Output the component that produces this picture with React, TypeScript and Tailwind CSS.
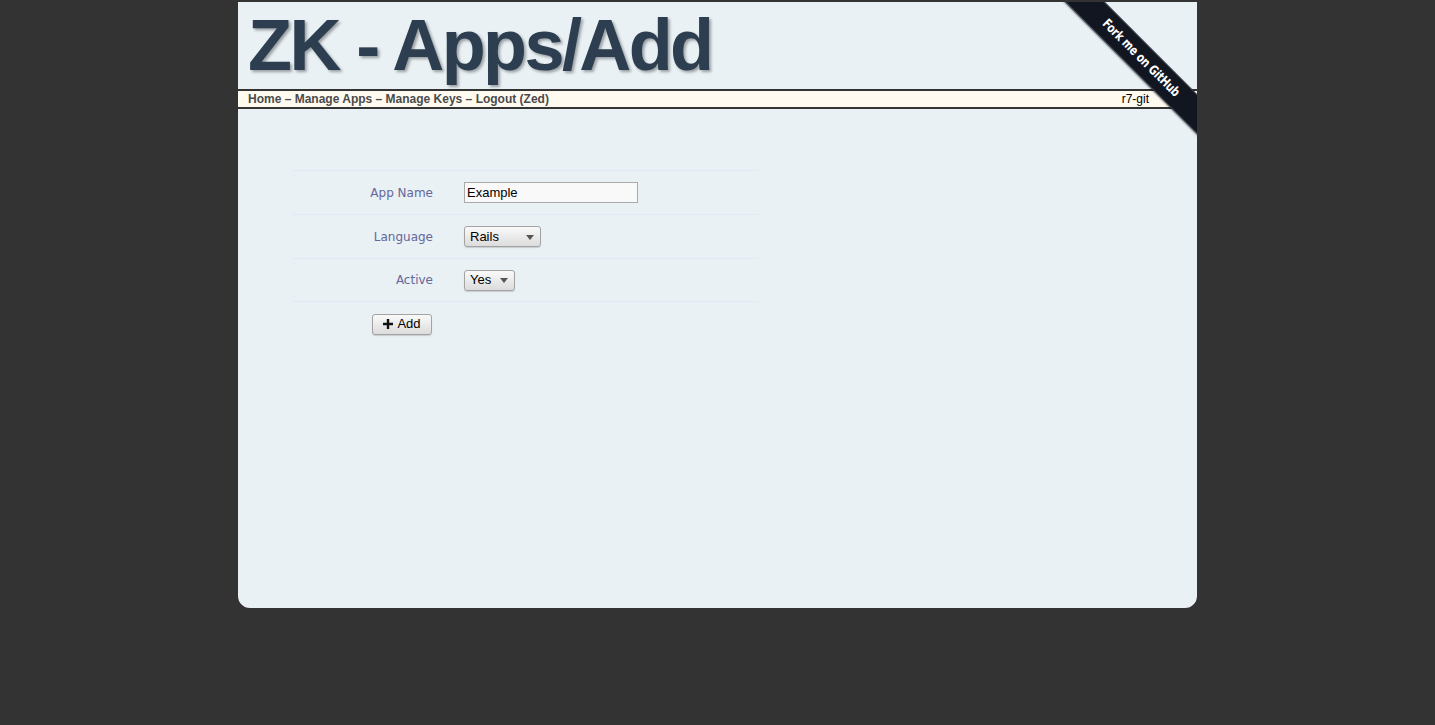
import React from "react";

function Ribbon() {
  return (
    <div className="absolute top-0 right-0 w-[140px] h-[140px] overflow-hidden pointer-events-none">
      <div className="absolute left-[-26px] top-[42px] w-[220px] h-[28px] rotate-45 bg-[#121621] border-y border-[#3d4250] flex items-center justify-center shadow-[0_1px_2px_rgba(0,0,0,0.5)]">
        <span className="inline-block scale-x-[0.86] text-white font-bold text-[13px] tracking-[-0.2px] font-['DejaVu_Sans_Condensed','Liberation_Sans_Narrow','Liberation_Sans',sans-serif]">
          Fork me on GitHub
        </span>
      </div>
    </div>
  );
}

function FakeSelect({ value, width }: { value: string; width: string }) {
  return (
    <div
      className={`${width} h-[21px] flex items-center justify-between pl-[5px] pr-[6px] rounded-[3px] border border-[#a3a3a3] bg-gradient-to-b from-[#fafafa] to-[#dcdcdc] shadow-[0_1px_1px_rgba(0,0,0,0.15)] text-[13px] text-black`}
    >
      <span>{value}</span>
      <svg width="8" height="5" viewBox="0 0 8 5" className="mt-[1px]">
        <path d="M0 0 L8 0 L4 5 Z" fill="#555" />
      </svg>
    </div>
  );
}

const rows = [
  { label: "App Name", control: "input" },
  { label: "Language", control: "lang" },
  { label: "Active", control: "active" },
];

export default function App() {
  return (
    <div className="min-h-[725px] bg-[#333333] font-['Liberation_Sans',Arial,sans-serif]">
      <div className="relative mx-auto w-[963px] h-[610px] border-2 border-[#333] rounded-b-[14px] bg-[#e9f1f5] overflow-hidden">
        {/* Header */}
        <div className="h-[87px] pl-[10px] pt-[7px]">
          <h1 className="text-[72px] leading-[72px] font-bold tracking-[-2.6px] text-[#2c3e50] [text-shadow:2px_2px_3px_rgba(0,0,0,0.35)]">
            ZK - Apps/Add
          </h1>
        </div>

        {/* Nav */}
        <div className="h-[20px] border-y-2 border-[#333] bg-[#fffaf0] flex items-center justify-between pl-[10px] pr-[48px] text-[12px]">
          <div className="font-bold text-[#4a4a4a]">
            Home – Manage Apps – Manage Keys – Logout (Zed)
          </div>
          <div className="text-black">r7-git</div>
        </div>

        {/* Form */}
        <div className="pt-[61px] pl-[55px]">
          <div className="w-[465px]">
            {rows.map((r, i) => (
              <div
                key={r.label}
                className={`h-[44px] flex items-center border-t border-[#e2e8f9] ${i === rows.length - 1 ? "border-b" : ""}`}
              >
                <div className="w-[156px] pr-[16px] text-right text-[12px] text-[#669] font-['DejaVu_Sans',sans-serif]">
                  {r.label}
                </div>
                <div className="pl-[15px]">
                  {r.control === "input" && (
                    <div className="w-[174px] h-[21px] border border-[#aaa] bg-[#f9f9f9] pl-[2px] flex items-center text-[13px] text-black">
                      Example
                    </div>
                  )}
                  {r.control === "lang" && <FakeSelect value="Rails" width="w-[77px]" />}
                  {r.control === "active" && <FakeSelect value="Yes" width="w-[51px]" />}
                </div>
              </div>
            ))}
            <div className="h-[44px] flex items-center">
              <div className="w-[156px] pr-[17px] flex justify-end">
                <button className="w-[60px] h-[21px] flex items-center justify-center gap-[4px] rounded-[3px] border border-[#a3a3a3] bg-gradient-to-b from-[#fafafa] to-[#dcdcdc] shadow-[0_1px_1px_rgba(0,0,0,0.15)] text-[13px] text-black">
                  <svg width="10" height="10" viewBox="0 0 10 10">
                    <path d="M3.8 0 H6.2 V3.8 H10 V6.2 H6.2 V10 H3.8 V6.2 H0 V3.8 H3.8 Z" fill="#111" />
                  </svg>
                  <span>Add</span>
                </button>
              </div>
            </div>
          </div>
        </div>

        <Ribbon />
      </div>
    </div>
  );
}
